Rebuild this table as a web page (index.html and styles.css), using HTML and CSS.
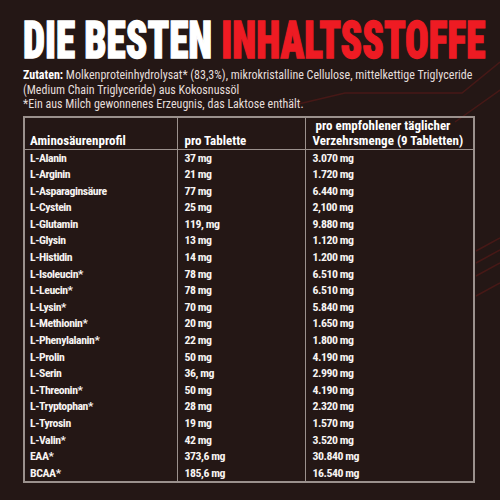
FILE: index.html
```html
<!DOCTYPE html>
<html lang="de">
<head>
    <meta charset="UTF-8">
    <meta name="viewport" content="width=device-width, initial-scale=1.0">
    <link rel="stylesheet" href="styles.css">
    <title>Die besten Inhaltsstoffe</title>
</head>
<body>

    <!-- dezente rote Linien im Hintergrund -->
    <svg class="deko" width="500" height="500" viewBox="0 0 500 500">
        <polyline points="290,106 345,93 462,93 500,62" />
        <polyline points="455,122 500,90" />
        <line x1="476" y1="251" x2="500" y2="238" />
        <line x1="476" y1="263" x2="500" y2="250" />
        <line x1="476" y1="276" x2="500" y2="263" />
        <line x1="476" y1="296" x2="500" y2="283" />
    </svg>

    <div class="seite">
        <h1 class="titel">DIE BESTEN <span class="rot">INHALTSSTOFFE</span></h1>

        <p class="zutaten">
            <b>Zutaten:</b> Molkenproteinhydrolysat* (83,3%), mikrokristalline Cellulose, mittelkettige Triglyceride
            (Medium Chain Triglyceride) aus Kokosnussöl<br>
            *Ein aus Milch gewonnenes Erzeugnis, das Laktose enthält.
        </p>

        <table class="tabelle">
            <thead>
                <tr>
                    <th class="spalte1">Aminosäurenprofil</th>
                    <th class="spalte2">pro Tablette</th>
                    <th class="spalte3">&nbsp;pro empfohlener täglicher<br>Verzehrsmenge (9 Tabletten)</th>
                </tr>
            </thead>
            <tbody>
                <tr><td>L-Alanin</td><td>37 mg</td><td>3.070 mg</td></tr>
                <tr><td>L-Arginin</td><td>21 mg</td><td>1.720 mg</td></tr>
                <tr><td>L-Asparaginsäure</td><td>77 mg</td><td>6.440 mg</td></tr>
                <tr><td>L-Cystein</td><td>25 mg</td><td>2,100 mg</td></tr>
                <tr><td>L-Glutamin</td><td>119, mg</td><td>9.880 mg</td></tr>
                <tr><td>L-Glysin</td><td>13 mg</td><td>1.120 mg</td></tr>
                <tr><td>L-Histidin</td><td>14 mg</td><td>1.200 mg</td></tr>
                <tr><td>L-Isoleucin*</td><td>78 mg</td><td>6.510 mg</td></tr>
                <tr><td>L-Leucin*</td><td>78 mg</td><td>6.510 mg</td></tr>
                <tr><td>L-Lysin*</td><td>70 mg</td><td>5.840 mg</td></tr>
                <tr><td>L-Methionin*</td><td>20 mg</td><td>1.650 mg</td></tr>
                <tr><td>L-Phenylalanin*</td><td>22 mg</td><td>1.800 mg</td></tr>
                <tr><td>L-Prolin</td><td>50 mg</td><td>4.190 mg</td></tr>
                <tr><td>L-Serin</td><td>36, mg</td><td>2.990 mg</td></tr>
                <tr><td>L-Threonin*</td><td>50 mg</td><td>4.190 mg</td></tr>
                <tr><td>L-Tryptophan*</td><td>28 mg</td><td>2.320 mg</td></tr>
                <tr><td>L-Tyrosin</td><td>19 mg</td><td>1.570 mg</td></tr>
                <tr><td>L-Valin*</td><td>42 mg</td><td>3.520 mg</td></tr>
                <tr><td>EAA*</td><td>373,6 mg</td><td>30.840 mg</td></tr>
                <tr><td>BCAA*</td><td>185,6 mg</td><td>16.540 mg</td></tr>
            </tbody>
        </table>
    </div>

</body>
</html>
```
FILE: styles.css
```css
body {
    margin: 0;
    background-color: #241715; /* Dunkelbraun */
    color: #ece6e3;
    font-family: "Roboto Condensed", "Roboto", sans-serif;
    font-stretch: 75%;
    position: relative;
    width: 500px;
    height: 500px;
    overflow: hidden;
}

.deko {
    position: absolute;
    top: 0;
    left: 0;
    fill: none;
    stroke: #5a1a18;
    stroke-width: 1.5;
    opacity: 0.65;
}

.seite {
    position: relative;
    padding: 15px 25px 0 23px;
}

.titel {
    margin: 0;
    font-size: 51px;
    line-height: 51px;
    height: 51px;
    font-weight: 900;
    color: #ffffff;
    white-space: nowrap;
    letter-spacing: 0;
    -webkit-text-stroke: 1.3px currentColor;
    transform: scaleX(0.77);
    transform-origin: left top;
}

.rot {
    color: #ee1b23; /* Rot */
}

.zutaten {
    margin: 2px 0 0;
    font-size: 12px;
    line-height: 14.5px;
    color: #e4dedb;
}

.zutaten b {
    font-weight: 700;
    color: #ffffff;
}

.tabelle {
    margin-top: 4px;
    width: 452px;
    border-collapse: collapse;
    border: 2px solid #9b918d;
    table-layout: fixed;
}

.tabelle th,
.tabelle td {
    box-sizing: border-box;
}

.tabelle th {
    font-size: 13px;
    line-height: 15px;
    font-weight: 700;
    text-align: left;
    vertical-align: bottom;
    padding: 0 4px 1px 5px;
    height: 31px;
    border-bottom: 1px solid #9b918d;
    color: #ffffff;
    white-space: nowrap;
}

.spalte1 { width: 153px; }
.spalte2 { width: 128px; }

.tabelle td {
    font-size: 11.8px;
    line-height: 16.6px;
    font-weight: 700;
    letter-spacing: -0.45px;
    padding: 0 5px;
    white-space: nowrap;
    color: #f7f3f1;
}

.tabelle th + th,
.tabelle td + td {
    border-left: 1px solid #9b918d;
    padding-left: 7px;
}
```
